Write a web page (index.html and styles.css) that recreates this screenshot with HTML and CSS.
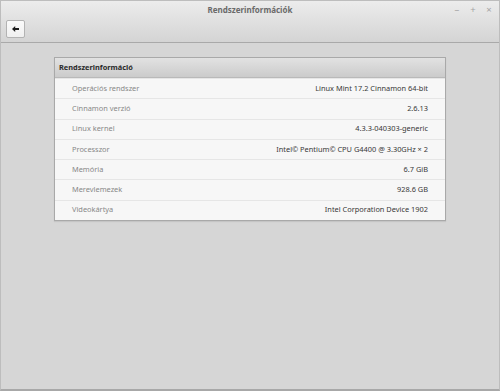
FILE: index.html
```html
<!DOCTYPE html>
<html lang="hu">
  <head>
    <meta charset="UTF-8" />
    <title>Rendszerinformációk</title>
    <link rel="stylesheet" href="styles.css">
  </head>
  <body>
    <div class="window">
      <!-- Title bar + toolbar -->
      <div class="header">
        <div class="titlebar">
          <span class="title">Rendszerinformációk</span>
          <div class="controls">
            <span class="ctl">&#8211;</span>
            <span class="ctl">+</span>
            <span class="ctl">&#215;</span>
          </div>
        </div>
        <div class="toolbar">
          <button class="back-btn">
            <svg width="7" height="6" viewBox="0 0 7 6">
              <path d="M0 3 L3.2 0 L3.2 1.9 L7 1.9 L7 4.1 L3.2 4.1 L3.2 6 Z" fill="#1e1e1e" />
            </svg>
          </button>
        </div>
      </div>

      <div class="content">
        <div class="card">
          <div class="card-head">Rendszerinformáció</div>
          <div class="row"><span class="label">Operációs rendszer</span><span class="value">Linux Mint 17.2 Cinnamon 64-bit</span></div>
          <div class="row"><span class="label">Cinnamon verzió</span><span class="value">2.6.13</span></div>
          <div class="row"><span class="label">Linux kernel</span><span class="value">4.3.3-040303-generic</span></div>
          <div class="row"><span class="label">Processzor</span><span class="value">Intel© Pentium© CPU G4400 @ 3.30GHz × 2</span></div>
          <div class="row"><span class="label">Memória</span><span class="value">6.7 GiB</span></div>
          <div class="row"><span class="label">Merevlemezek</span><span class="value">928.6 GB</span></div>
          <div class="row"><span class="label">Videokártya</span><span class="value">Intel Corporation Device 1902</span></div>
        </div>
      </div>
    </div>
  </body>
</html>
```

FILE: styles.css
```css
body {
  margin: 0;
  font-family: "Noto Sans", sans-serif;
  font-size: 7.4px;
  color: #333;
  background: #d6d6d6;
}

.window {
  width: 500px;
  height: 391px;
  box-sizing: border-box;
  border: 1px solid #bdbdbd;
  border-bottom: 2px solid #a8a8a8;
  background: #d6d6d6;
  display: flex;
  flex-direction: column;
}

.header {
  height: 42px;
  box-sizing: border-box;
  background: linear-gradient(#ececec, #d4d4d4);
  border-bottom: 1px solid #a9a9a9;
}

.titlebar {
  height: 17px;
  display: flex;
  align-items: center;
  justify-content: center;
  position: relative;
}

.title {
  font-weight: bold;
  font-size: 8px;
  color: #6a6a6a;
}

.controls {
  position: absolute;
  right: 6px;
  top: 2px;
  display: flex;
  gap: 8px;
  color: #a4a4a4;
  font-size: 9.5px;
}

.ctl {
  width: 8px;
  text-align: center;
}

.toolbar {
  padding: 2px 5px;
}

.back-btn {
  width: 19px;
  height: 18px;
  padding: 0;
  border: 1px solid #b3b3b3;
  border-radius: 2px;
  background: linear-gradient(#fbfbfb, #f0f0f0);
  display: flex;
  align-items: center;
  justify-content: center;
}

.content {
  padding: 14px 0 0 53px;
}

.card {
  width: 392px;
  box-sizing: border-box;
  border: 1px solid #a9a9a9;
  background: #f7f7f7;
  box-shadow: 0 1px 1px rgba(0, 0, 0, 0.08);
}

.card-head {
  height: 19px;
  line-height: 19px;
  padding-left: 4px;
  font-weight: bold;
  color: #2a2a2a;
  background: linear-gradient(#e2e2e2, #cbcbcb);
  border-bottom: 1px solid #b9b9b9;
}

.row {
  display: flex;
  align-items: center;
  justify-content: space-between;
  padding: 0 17px 2px 17px;
  box-sizing: border-box;
  height: 20.3px;
  border-top: 1px solid #e6e6e6;
}

.row:first-of-type {
  border-top: none;
}

.label {
  color: #888;
}

.value {
  color: #383838;
}
```
